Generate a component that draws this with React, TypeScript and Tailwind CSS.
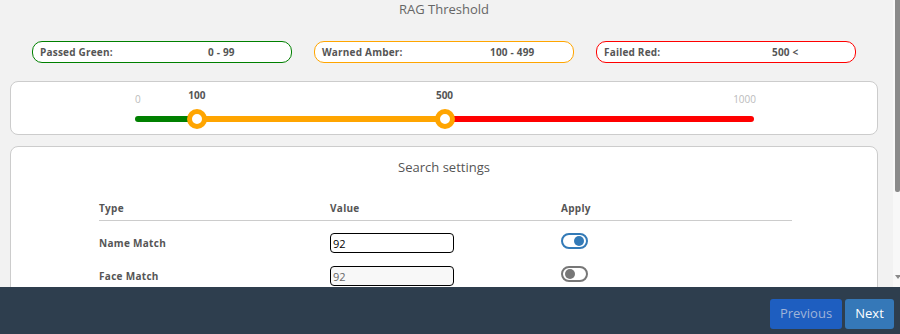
import React, { useState } from 'react';

// --- DADOS ---
const RAG_PILLS = [
  { label: 'Passed Green:', value: '0 - 99', border: 'border-[#008000]' },
  { label: 'Warned Amber:', value: '100 - 499', border: 'border-[#ffa500]' },
  { label: 'Failed Red:', value: '500 <', border: 'border-[#ff0000]' },
];

const MAX = 1000;
const AMBER_AT = 100;
const RED_AT = 500;

const Toggle: React.FC<{ on: boolean; onClick: () => void }> = ({ on, onClick }) => (
  <button
    onClick={onClick}
    className={`w-[27px] h-[16px] rounded-full border-2 flex items-center px-[2px] bg-white ${
      on ? 'border-[#337ab7] justify-end' : 'border-[#777] justify-start'
    }`}
  >
    <span className={`w-[10px] h-[10px] rounded-full ${on ? 'bg-[#337ab7]' : 'bg-[#777]'}`} />
  </button>
);

const RagSlider: React.FC = () => {
  const amberPct = (AMBER_AT / MAX) * 100;
  const redPct = (RED_AT / MAX) * 100;
  return (
    <div className="relative w-[619px] h-[52px]">
      <span className="absolute left-0 top-[11px] text-[10px] leading-[12px] text-[#bbb]">0</span>
      <span className="absolute right-[-2px] top-[11px] text-[10px] leading-[12px] text-[#bbb]">1000</span>

      <div className="absolute left-0 right-0 top-[34px] h-[6px] rounded-full overflow-hidden flex">
        <div className="bg-[#008000]" style={{ width: `${amberPct}%` }} />
        <div className="bg-[#ffa500]" style={{ width: `${redPct - amberPct}%` }} />
        <div className="bg-[#ff0000] flex-1" />
      </div>

      {[AMBER_AT, RED_AT].map((v) => (
        <div key={v} className="absolute top-0 w-0" style={{ left: `${(v / MAX) * 100}%` }}>
          <span className="absolute left-[-15px] w-[30px] top-[7px] text-center text-[10px] leading-[12px] font-bold text-[#555]">
            {v}
          </span>
          <span className="absolute left-[-10px] top-[27px] w-[20px] h-[20px] rounded-full border-[5px] border-[#ffa500] bg-white" />
        </div>
      ))}
    </div>
  );
};

const App: React.FC = () => {
  const [nameOn, setNameOn] = useState(true);
  const [faceOn, setFaceOn] = useState(false);

  return (
    <div className="w-[900px] h-[334px] flex flex-col bg-[#f2f2f2] overflow-hidden font-['Open_Sans',sans-serif]">
      <div className="h-[287px] flex overflow-hidden">
        {/* conteúdo */}
        <div className="w-[888px] px-[10px]">
          <h2 className="text-[13px] leading-[18px] text-center text-[#666]">RAG Threshold</h2>

          <div className="mt-[23px] px-[22px] grid grid-cols-3 gap-[22px]">
            {RAG_PILLS.map((p) => (
              <div
                key={p.label}
                className={`h-[22px] rounded-[10px] border bg-white flex items-center pl-[7px] text-[10px] font-bold tracking-[0.2px] text-[#555] ${p.border}`}
              >
                <span className="w-[168px]">{p.label}</span>
                <span>{p.value}</span>
              </div>
            ))}
          </div>

          <div className="mt-[18px] h-[54px] bg-white border border-[#ccc] rounded-[8px] pl-[124px]">
            <RagSlider />
          </div>

          <div className="mt-[11px] h-[200px] bg-white border border-[#ccc] rounded-[8px] pt-[11px]">
            <h3 className="text-[13px] leading-[18px] text-center text-[#555]">Search settings</h3>

            <div className="ml-[88px] w-[693px] mt-[21px] text-[10px] font-bold tracking-[0.3px] text-[#555]">
              <div className="grid grid-cols-3 h-[24px] items-center border-b border-[#ccc]">
                <span>Type</span>
                <span>Value</span>
                <span>Apply</span>
              </div>

              <div className="grid grid-cols-3 h-[33px] pt-[12px]">
                <span className="self-center">Name Match</span>
                <input
                  defaultValue="92"
                  className="w-[124px] h-[20px] border border-black rounded-[4px] px-[2px] text-[11px] font-normal tracking-normal text-black bg-white outline-none"
                />
                <div className="flex items-start">
                  <Toggle on={nameOn} onClick={() => setNameOn(!nameOn)} />
                </div>
              </div>

              <div className="grid grid-cols-3 h-[33px] pt-[12px]">
                <span className="self-center">Face Match</span>
                <input
                  defaultValue="92"
                  disabled
                  className="w-[124px] h-[20px] border border-black rounded-[4px] px-[2px] text-[11px] font-normal tracking-normal text-[#666] bg-[#f8f8f8] outline-none"
                />
                <div className="flex items-start">
                  <Toggle on={faceOn} onClick={() => setFaceOn(!faceOn)} />
                </div>
              </div>
            </div>
          </div>
        </div>

        {/* barra de rolagem */}
        <div className="w-[12px] flex">
          <div className="w-[5px]" />
          <div className="w-[7px] bg-[#f8f8f8] flex flex-col">
            <div className="ml-[2px] w-[5px] h-[192px] bg-[#8a8a8a] rounded-b-[2px]" />
            <div className="mt-auto mb-[8px] ml-[2px] w-0 h-0 border-l-[3px] border-r-[3px] border-t-[4px] border-l-transparent border-r-transparent border-t-[#8a8a8a]" />
          </div>
        </div>
      </div>

      <footer className="h-[47px] bg-[#2e3e4e] flex justify-end items-start pt-[12px] pr-[6px] gap-[3px]">
        <button className="w-[72px] h-[30px] rounded-[3px] bg-[#1e5ec0] text-[#9fb4d8] text-[13px]">Previous</button>
        <button className="w-[49px] h-[30px] rounded-[3px] bg-[#3578b8] text-white text-[13px]">Next</button>
      </footer>
    </div>
  );
};

export default App;
